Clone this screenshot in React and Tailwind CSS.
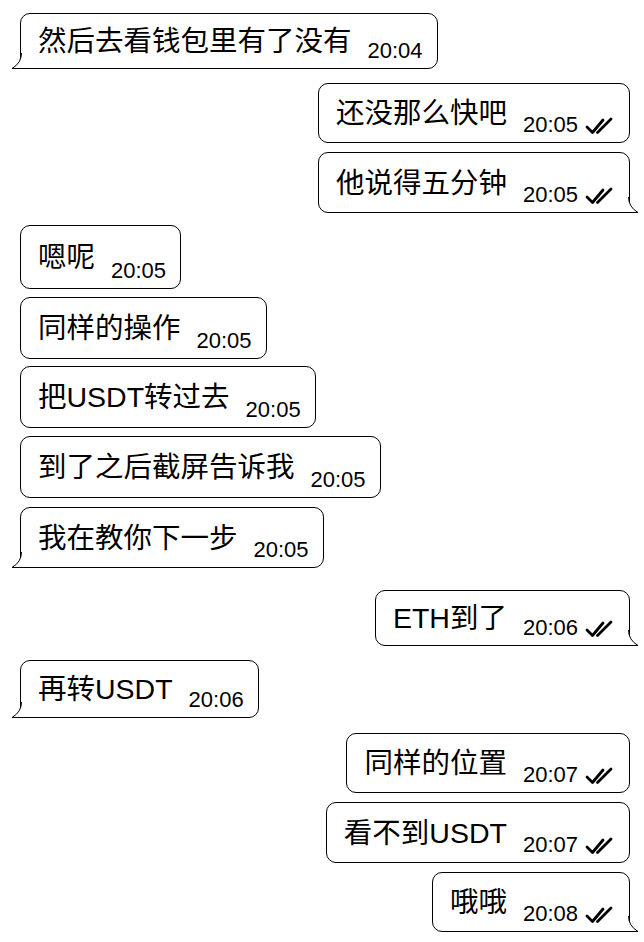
import React from 'react'

const messages = [
  { side: 'left', text: '然后去看钱包里有了没有', time: '20:04', top: 13, h: 56, tail: true },
  { side: 'right', text: '还没那么快吧', time: '20:05', top: 14, h: 60 },
  { side: 'right', text: '他说得五分钟', time: '20:05', top: 9, h: 61, tail: true },
  { side: 'left', text: '嗯呢', time: '20:05', top: 12, h: 64 },
  { side: 'left', text: '同样的操作', time: '20:05', top: 8, h: 62 },
  { side: 'left', text: '把USDT转过去', time: '20:05', top: 7, h: 62 },
  { side: 'left', text: '到了之后截屏告诉我', time: '20:05', top: 8, h: 62 },
  { side: 'left', text: '我在教你下一步', time: '20:05', top: 9, h: 61, tail: true },
  { side: 'right', text: 'ETH到了', time: '20:06', top: 22, h: 56, tail: true },
  { side: 'left', text: '再转USDT', time: '20:06', top: 14, h: 58, tail: true },
  { side: 'right', text: '同样的位置', time: '20:07', top: 15, h: 60 },
  { side: 'right', text: '看不到USDT', time: '20:07', top: 9, h: 61 },
  { side: 'right', text: '哦哦', time: '20:08', top: 9, h: 60, tail: true },
]

const Checks = () => (
  <svg width="30" height="18" viewBox="0 0 30 18" className="ml-[7px] mb-[1px]" fill="none" stroke="black" strokeWidth="2.8" strokeLinecap="round" strokeLinejoin="round">
    <path d="M2 10 L7.5 15.5 L18 3" />
    <path d="M12.5 15.5 L26 2" />
  </svg>
)

const Tail = ({ side }) =>
  side === 'left' ? (
    <svg width="12" height="16" viewBox="0 0 12 16" className="absolute left-[-10px] bottom-[-1px]">
      <path d="M10.5 0 Q10.5 10 1 15.5 L12 15.5 L12 0 Z" fill="white" />
      <path d="M10.5 0 Q10.5 10 1 15.5 H12" fill="none" stroke="black" strokeWidth="1" />
    </svg>
  ) : (
    <svg width="12" height="16" viewBox="0 0 12 16" className="absolute right-[-10px] bottom-[-1px]">
      <path d="M1.5 0 Q1.5 10 11 15.5 L0 15.5 L0 0 Z" fill="white" />
      <path d="M1.5 0 Q1.5 10 11 15.5 H0" fill="none" stroke="black" strokeWidth="1" />
    </svg>
  )

const Bubble = ({ m }) => {
  const left = m.side === 'left'
  const corner = m.tail ? (left ? 'rounded-bl-none' : 'rounded-br-none') : ''
  return (
    <div className={`flex ${left ? 'justify-start pl-[20px]' : 'justify-end pr-[14px]'}`} style={{ marginTop: m.top }}>
      <div
        className={`relative flex items-center bg-white border border-black rounded-[10px] ${corner} pl-[17px] pr-[14px]`}
        style={{ height: m.h }}
      >
        <span className="text-[28.5px] leading-[34px] text-black">{m.text}</span>
        <span className="self-end mb-[6px] ml-[16px] flex items-end">
          <span className="text-[22px] leading-none text-black">{m.time}</span>
          {!left && <Checks />}
        </span>
        {m.tail && <Tail side={m.side} />}
      </div>
    </div>
  )
}

export default function App() {
  return (
    <div
      className="w-[644px] h-[942px] bg-white overflow-hidden flex flex-col"
      style={{ fontFamily: '"Liberation Sans", "Noto Sans CJK SC", sans-serif' }}
    >
      {messages.map((m, i) => (
        <Bubble key={i} m={m} />
      ))}
    </div>
  )
}
